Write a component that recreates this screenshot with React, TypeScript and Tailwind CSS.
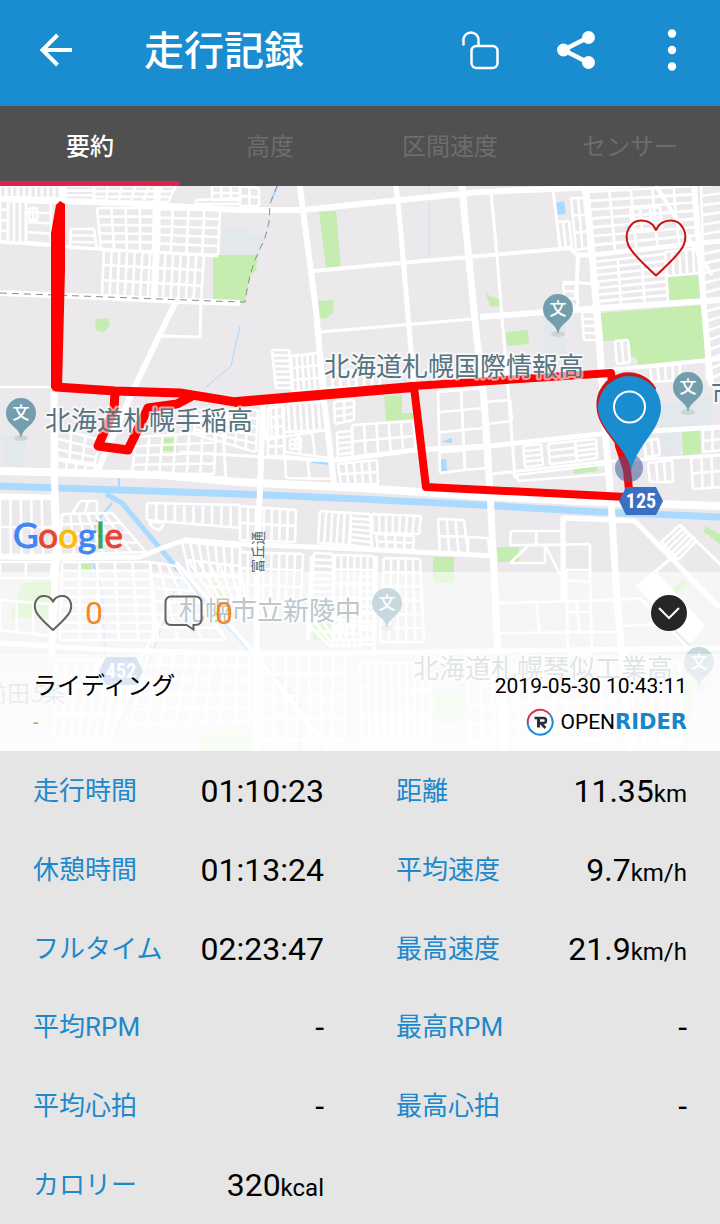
import React from "react";

type Quad = [number, number, number, number, number, number, number, number];
/** corners clockwise from top left, cells across, cells down, stroke width */
type StreetBlock = [Quad, number, number, number?];

const streetBlocks: StreetBlock[] = [
  [[0, 186, 60, 186, 60, 198, 0, 197], 10, 1],
  [[0, 199, 8, 199, 8, 242, 0, 241], 1, 4],
  [[8, 199, 26, 200, 26, 243, 8, 242], 3, 1],
  [[26, 202, 51, 203, 51, 244, 26, 242], 1, 4],
  [[29, 208, 37, 208, 37, 220, 29, 220], 2, 1],
  [[65, 186, 94, 186, 94, 200, 66, 200], 1, 3],
  [[94, 186, 176, 186, 168, 202, 94, 202], 6, 3],
  [[212, 186, 240, 186, 240, 200, 212, 200], 3, 2],
  [[196, 200, 240, 198, 240, 204, 195, 204], 1, 1],
  [[71, 229, 94, 229, 97, 249, 70, 248], 1, 3],
  [[97, 208, 154, 208, 153, 251, 101, 250], 4, 5],
  [[157, 209, 220, 210, 218, 255, 155, 252], 4, 5],
  [[104, 250, 204, 255, 201, 301, 102, 295], 13, 3],
  [[240, 186, 259, 188, 259, 206, 240, 206], 2, 2],
  [[272, 350, 289, 350, 292, 388, 276, 388], 1, 7],
  [[291, 356, 318, 353, 321, 390, 293, 392], 5, 3],
  [[324, 372, 380, 370, 380, 386, 325, 388], 7, 1],
  [[557, 222, 569, 221, 572, 249, 560, 248], 2, 1],
  [[571, 198, 585, 198, 589, 248, 576, 250], 2, 3],
  [[563, 284, 577, 284, 578, 306, 565, 306], 1, 3],
  [[582, 312, 599, 312, 602, 340, 584, 340], 1, 4],
  [[588, 192, 695, 186, 700, 243, 594, 254], 5, 7],
  [[630, 209, 660, 207, 662, 228, 632, 230], 3, 2],
  [[594, 262, 665, 254, 668, 302, 598, 308], 3, 7],
  [[665, 252, 700, 248, 701, 273, 667, 276], 5, 1],
  [[701, 186, 721, 184, 725, 372, 707, 380], 1, 20],
  [[615, 341, 628, 340, 630, 362, 617, 364], 2, 1],
  [[650, 367, 680, 364, 680, 380, 652, 382], 4, 1],
  [[57, 428, 100, 440, 94, 466, 57, 460], 3, 3],
  [[57, 458, 96, 464, 94, 472, 57, 470], 4, 1],
  [[136, 437, 216, 432, 214, 474, 132, 474], 6, 4],
  [[196, 410, 258, 410, 256, 452, 194, 434], 6, 5],
  [[264, 404, 324, 402, 326, 430, 266, 440], 10, 1],
  [[268, 408, 284, 406, 284, 456, 268, 456], 2, 5],
  [[290, 440, 301, 438, 301, 449, 290, 449], 2, 2],
  [[284, 432, 326, 430, 330, 458, 285, 452], 3, 1],
  [[285, 456, 330, 461, 333, 479, 286, 478], 2, 1],
  [[334, 402, 354, 400, 354, 420, 335, 424], 2, 3],
  [[337, 432, 352, 431, 353, 458, 338, 460], 1, 5],
  [[352, 425, 413, 421, 416, 451, 353, 458], 5, 2],
  [[338, 464, 377, 460, 378, 484, 341, 484], 5, 2],
  [[438, 392, 461, 390, 465, 470, 440, 473], 1, 4],
  [[461, 390, 482, 388, 486, 468, 465, 470], 1, 4],
  [[240, 506, 296, 510, 295, 542, 240, 540], 7, 2],
  [[320, 511, 351, 513, 349, 545, 318, 543], 5, 1],
  [[351, 513, 370, 514, 372, 548, 350, 545], 1, 6],
  [[372, 514, 421, 516, 419, 534, 373, 533], 7, 1],
  [[376, 534, 414, 536, 413, 550, 378, 549], 4, 2],
  [[438, 519, 464, 520, 468, 553, 440, 553], 3, 2],
  [[468, 537, 488, 538, 490, 556, 468, 554], 1, 1],
  [[240, 552, 303, 554, 300, 620, 240, 616], 8, 4],
  [[314, 553, 333, 554, 333, 604, 311, 604], 1, 8],
  [[335, 555, 374, 556, 374, 640, 333, 640], 6, 6],
  [[384, 558, 420, 559, 424, 642, 380, 642], 5, 6],
  [[147, 503, 240, 505, 240, 528, 147, 520], 10, 1],
  [[149, 522, 164, 523, 160, 530, 153, 528], 1, 1],
  [[182, 542, 240, 547, 240, 576, 190, 576], 7, 1],
  [[0, 499, 52, 499, 54, 555, 0, 555], 5, 2],
  [[80, 501, 97, 501, 97, 513, 72, 514], 2, 1],
  [[62, 514, 112, 513, 146, 552, 60, 555], 6, 4],
  [[0, 562, 52, 562, 51, 578, 0, 578], 2, 1],
  [[62, 562, 150, 562, 158, 640, 60, 640], 5, 9],
  [[188, 560, 240, 566, 248, 612, 222, 612], 5, 4],
  [[150, 562, 176, 566, 226, 640, 154, 640], 3, 6],
  [[0, 600, 50, 604, 50, 636, 0, 630], 3, 1],
  [[150, 650, 250, 652, 250, 722, 130, 724], 8, 5],
  [[56, 660, 128, 660, 112, 740, 54, 740], 7, 3],
  [[262, 652, 345, 652, 345, 740, 262, 740], 7, 4],
  [[300, 616, 360, 622, 360, 646, 330, 646], 6, 2],
  [[360, 576, 374, 576, 374, 652, 360, 652], 1, 10],
  [[360, 662, 430, 664, 430, 740, 362, 738], 9, 3],
  [[468, 668, 612, 664, 616, 740, 470, 742], 12, 4],
  [[632, 664, 680, 662, 682, 742, 634, 744], 5, 3],
  [[485, 402, 510, 400, 512, 421, 486, 424], 1, 1],
  [[523, 446, 541, 444, 543, 465, 525, 467], 1, 4],
  [[548, 444, 575, 441, 577, 461, 550, 464], 1, 3],
  [[575, 441, 596, 439, 597, 458, 577, 461], 1, 4],
  [[517, 475, 607, 464, 608, 474, 518, 481], 1, 1],
  [[644, 441, 658, 439, 660, 455, 646, 457], 2, 1],
  [[648, 463, 672, 460, 673, 482, 650, 482], 3, 1],
  [[691, 458, 722, 455, 722, 487, 693, 489], 3, 2],
  [[703, 430, 722, 428, 722, 450, 703, 452], 2, 2],
  [[511, 531, 562, 531, 562, 545, 510, 545], 2, 1],
  [[529, 545, 545, 545, 545, 563, 510, 563], 1, 1],
  [[545, 545, 590, 544, 590, 582, 563, 580], 1, 1],
  [[661, 542, 680, 525, 696, 541, 678, 560], 1, 5],
  [[640, 588, 656, 574, 704, 626, 690, 642], 8, 1],
  [[497, 603, 616, 600, 620, 632, 499, 633], 3, 1],
  [[566, 570, 590, 570, 592, 654, 568, 654], 1, 2],
  [[620, 600, 640, 598, 690, 650, 622, 652], 1, 2],
];

function lattice([[ax, ay, bx, by, cx, cy, dx, dy], cols, rows]: StreetBlock): string {
  const mix = (p: number, q: number, t: number) => Math.round((p + (q - p) * t) * 10) / 10;
  const parts: string[] = [];
  for (let i = 0; i <= cols; i++) {
    const t = i / cols;
    parts.push(`M${mix(ax, bx, t)} ${mix(ay, by, t)}L${mix(dx, cx, t)} ${mix(dy, cy, t)}`);
  }
  for (let j = 0; j <= rows; j++) {
    const t = j / rows;
    parts.push(`M${mix(ax, dx, t)} ${mix(ay, dy, t)}L${mix(bx, cx, t)} ${mix(by, cy, t)}`);
  }
  return parts.join("");
}

const roads: [string, number][] = [
  ["M0 199L120 203L240 210L303 210L360 204L480 192L600 187L640 184", 6],
  ["M63 186V204", 5],
  ["M157 186L157 240L154 298", 7],
  ["M0 242L100 249L218 256", 3],
  ["M0 293L100 297L180 301L240 303", 6],
  ["M176 301L135 386L97 472", 6],
  ["M201 301L200 337L162 336", 3],
  ["M300 186L303 210L316 310L324 400L334 484", 6],
  ["M396 186L400 222L414 386", 5],
  ["M462 186L465 220L477 340L484 400L490 490L498 655L504 751", 7],
  ["M585 186L590 230L600 350L606 440L611 500L617 600L622 655L630 751", 7],
  ["M694 186L700 260L706 330L711 385", 6],
  ["M313 271L400 263L480 256L570 248L578 256L576 300", 4],
  ["M320 332L473 319", 3],
  ["M480 317L600 308L720 300", 6],
  ["M491 192L497 256L503 330L508 388L515 478", 3],
  ["M553 190L560 247", 3],
  ["M563 282L600 284", 3],
  ["M577 255L592 255L700 243L720 241", 5],
  ["M655 184L676 218L700 256L712 275", 4],
  ["M600 371L720 359", 4],
  ["M0 387H55", 2],
  ["M330 461L414 450L490 446L600 434L720 427", 5],
  ["M492 474L600 462L720 455", 3],
  ["M0 471L160 475L240 482L360 488L480 496L600 502L720 506", 8],
  ["M54 392L54 470L57 540L54 600L52 655", 7],
  ["M0 496L55 497", 5],
  ["M0 557L60 558L140 557L162 548L185 540L240 544L360 549L494 556", 5],
  ["M263 400L260 490L257 560L256 751", 6],
  ["M222 410L224 450L226 480L288 482", 3],
  ["M180 452L330 461", 3],
  ["M563 600L563 518L635 521L720 608", 5],
  ["M680 525L722 566", 3],
  ["M636 588L690 542", 3],
  ["M0 643L110 650L250 654L420 652L720 648", 5],
  ["M176 562L256 655L330 751", 4],
  ["M172 600L140 660L110 740", 3],
  ["M312 556L308 640", 4],
  ["M376 556L374 655", 4],
];

const parks = [
  "M213 255H258L256 270L250 276L245 302H213Z",
  "M319 212L336 211L341 267L326 268Z",
  "M317 301L334 300L333 313L325 319L319 318Z",
  "M96 319L108 318L110 325L104 332L97 331L95 326Z",
  "M668 277L700 274L702 299L669 302Z",
  "M600 313L703 305L707 358L638 365L637 358L631 357L629 340L602 341Z",
  "M485 291L491 297L500 299V307L490 306Z",
  "M506 332L528 330L529 344L507 346Z",
  "M161 438H177V451H161Z",
  "M384 396L402 395V413H413V419L386 421Z",
  "M573 466L597 463V471L574 474Z",
  "M682 432L700 429L701 453L683 456Z",
  "M497 547H519V562H498Z",
  "M433 557H454V583H433Z",
  "M79 561H92V573H79Z",
  "M705 526L722 536V546L704 532Z",
  "M22 582L52 581L50 619L11 618Z",
  "M213 581L224 586L225 595L214 596Z",
  "M313 623H331V640H313Z",
  "M672 590L684 579L688 583L676 595Z",
  "M198 731L252 729V751H200Z",
  "M434 694H463V723H434Z",
  "M684 680H691V751H684Z",
  "M308 718L322 729L312 730Z",
];

function SchoolPin({ x, y }: { x: number; y: number }) {
  return (
    <g transform={`translate(${x} ${y})`}>
      <ellipse cx="0" cy="25" rx="7" ry="3" fill="#b9bec2" opacity=".5" />
      <path
        d="M0 25C-1.500 18-5 16-10.500 10.700A15 15 0 1 1 10.500 10.700C5 16 1.500 18 0 25Z"
        fill="#739eae"
      />
      <text y="6" textAnchor="middle" fontSize="17" fontWeight="500" fill="#fff">
        文
      </text>
    </g>
  );
}

function MapLabel({ x, y, children }: { x: number; y: number; children: string }) {
  return (
    <text
      x={x}
      y={y}
      fontSize="26"
      fill="#567380"
      stroke="#fff"
      strokeOpacity=".6"
      strokeWidth="4"
      strokeLinejoin="round"
      paintOrder="stroke"
    >
      {children}
    </text>
  );
}

function RouteShield({ x, y, label }: { x: number; y: number; label: string }) {
  return (
    <g transform={`translate(${x} ${y})`}>
      <path d="M-22 0L-15-14H15L22 0L15 14H-15Z" fill="#3a6fc3" />
      <text
        y="7"
        textAnchor="middle"
        fontSize="20"
        fontWeight="700"
        fill="#fff"
        fontFamily="'Liberation Sans Narrow', 'Roboto Condensed', sans-serif"
      >
        {label}
      </text>
    </g>
  );
}

function RideMap() {
  return (
    <svg
      viewBox="0 186 720 565"
      preserveAspectRatio="xMidYMid slice"
      className="absolute inset-0 size-full font-['Noto_Sans_CJK_JP',sans-serif]"
      role="img"
      aria-label="走行ルートの地図"
    >
      <rect y="186" width="720" height="565" fill="#ebe9ec" />
      <g fill="#e2e8eb">
        <path d="M222 229H251V236H266L258 256H221Z" />
        <path d="M543 316H566V354H543Z" />
        <path d="M0 436H25V468H6Z" />
        <path d="M660 406L710 394L712 424L660 432Z" />
        <path d="M660 434L680 431L681 455L661 457Z" />
        <path d="M376 646H392V670H376Z" />
      </g>
      <g fill="#c5edb0">
        {parks.map((d) => (
          <path key={d} d={d} />
        ))}
      </g>
      <g fill="#aadaff">
        <path d="M556 203L564 201L566 214L557 215Z" />
        <path d="M312 462L318 460L329 461V465L312 463Z" />
        <path d="M440 460L446 459L447 471L440 472Z" />
        <path d="M440 442L452 438V443Z" />
      </g>
      <g fill="none" stroke="#aadaff">
        <path d="M0 486L60 488L180 492L240 494L360 499L480 505L600 512L720 517" strokeWidth="7" />
        <path d="M106 494L122 503L186 579L250 650L298 700L301 751" strokeWidth="5" />
        <path d="M112 503L95 524L92 560L102 590L105 655" strokeWidth="2" />
        <path d="M119 472V492" strokeWidth="2" />
        <path d="M180 575L150 660L112 740" strokeWidth="2" />
        <path d="M240 326L231 366L205 388" strokeWidth="1" />
        <path d="M278 186L271 200" strokeWidth="2" />
        <path d="M429 186V260" strokeWidth="1" strokeOpacity=".4" />
        <path d="M672 628L692 648" strokeWidth="2" />
      </g>
      <g fill="none" stroke="#fff">
        {streetBlocks.map((block, i) => (
          <path key={i} d={lattice(block)} strokeWidth={block[3] ?? 2.6} />
        ))}
        {roads.map(([d, width]) => (
          <path key={d} d={d} strokeWidth={width} strokeLinejoin="round" />
        ))}
      </g>
      <path
        d="M0 293L240 302H245L248 284L254 262L265 238L269 222L270 204L277 186"
        fill="none"
        stroke="#8d8d8d"
        strokeWidth="1"
        strokeDasharray="7 5"
      />

      <g fill="none" stroke="#f00" strokeLinejoin="round" strokeLinecap="round">
        <path d="M56 205L60 201L65 204L65 270L62 388L51 388V233Z" fill="#f00" stroke="none" />
        <path d="M56 387L115 391L180 393L235 402" strokeWidth="9" />
        <path d="M237 402L413 387" strokeWidth="10" />
        <path d="M413 386L611 373" strokeWidth="8" />
        <path d="M115 392L114 410L98 446L128 450L148 408L177 404L192 396" strokeWidth="9" />
        <path d="M414 387L426 487L626 497" strokeWidth="8" />
        <path d="M611 373L614 400L619 446L627 470L630 500" strokeWidth="8" strokeLinecap="butt" />
      </g>

      <MapLabel x={324} y={376}>北海道札幌国際情報高</MapLabel>
      <MapLabel x={45} y={430}>北海道札幌手稲高</MapLabel>
      <MapLabel x={179} y={620}>札幌市立新陵中</MapLabel>
      <MapLabel x={413} y={678}>北海道札幌琴似工業高</MapLabel>
      <MapLabel x={711} y={403}>市</MapLabel>
      <text x="-16" y="702" fontSize="23" fill="#7b8a92">
        前田<tspan fontStyle="italic">5</tspan>条
      </text>
      <text transform="translate(263 573) rotate(-90)" fontSize="14" fill="#5d666b">
        富丘通
      </text>
      <SchoolPin x={558} y={309} />
      <SchoolPin x={21} y={413} />
      <SchoolPin x={688} y={387} />
      <SchoolPin x={387} y={603} />
      <SchoolPin x={699} y={662} />
      <RouteShield x={121} y={671} label="452" />

      <circle cx="629" cy="468" r="14" fill="#3f5a96" fillOpacity=".55" />
      <path d="M626 480L616 448L600 425A32 32 0 1 1 658 392L640 440Z" fill="#c81414" fillOpacity="0" />
      <path d="M630 470C624 446 596.500 430 596.500 406A32 32 0 0 1 656 388Z" fill="#d01414" />
      <path d="M631 471C627 446 598 430 598 407.500A31.500 31.500 0 0 1 661 407.500C661 430 636 446 631 471Z" fill="#1a8cd0" />
      <circle cx="629.500" cy="407" r="15.500" fill="none" stroke="#fff" strokeWidth="2" />
      <RouteShield x={641} y={501} label="125" />
      <text x="13" y="548" fontFamily="Lato, sans-serif" fontSize="35" strokeWidth="1">
        <tspan fill="#4285f4" stroke="#4285f4">G</tspan>
        <tspan fill="#ea4335" stroke="#ea4335">o</tspan>
        <tspan fill="#fbbc05" stroke="#fbbc05">o</tspan>
        <tspan fill="#4285f4" stroke="#4285f4">g</tspan>
        <tspan fill="#34a853" stroke="#34a853">l</tspan>
        <tspan fill="#ea4335" stroke="#ea4335">e</tspan>
      </text>
    </svg>
  );
}

function HeartIcon({ className }: { className: string }) {
  return (
    <svg viewBox="0 0 62 58" className={className} fill="none" stroke="currentColor" aria-hidden="true">
      <path
        d="M31 56.500C23 49 8 36 3.500 26.500C-2 13 6 1.500 16 1.500C23 1.500 28.500 5 31 11C33.500 5 39 1.500 46 1.500C56 1.500 64 13 58.500 26.500C54 36 39 49 31 56.500Z"
        vectorEffect="non-scaling-stroke"
        strokeWidth="2"
        strokeLinejoin="round"
      />
    </svg>
  );
}

function Header() {
  return (
    <header className="flex h-[106px] items-center bg-[#1a8cd0] pb-1.5 pl-9 text-white">
      <button type="button" aria-label="戻る" className="flex size-10 items-center justify-center">
        <svg viewBox="0 0 40 40" className="size-10" fill="none" stroke="currentColor" strokeWidth="4">
          <path d="M36 20H7M21.500 5L6.500 20L21.500 35" />
        </svg>
      </button>
      <h1 className="ml-17 flex-1 pt-1 text-[40px] leading-12 font-medium">走行記録</h1>
      <button type="button" aria-label="公開設定" className="flex w-24 justify-center">
        <svg viewBox="0 0 40 40" className="size-10" fill="none" stroke="currentColor" strokeWidth="2.500">
          <path d="M3.500 14.500V10A7.500 7.500 0 0 1 18.500 10V15.500" strokeLinecap="round" />
          <rect x="11.500" y="16" width="26" height="22" rx="5" />
        </svg>
      </button>
      <button type="button" aria-label="共有" className="flex w-24 justify-center">
        <svg viewBox="0 0 40 40" className="size-10" fill="currentColor">
          <path d="M32 7.500L7.500 20L32 32.500" fill="none" stroke="currentColor" strokeWidth="4.500" />
          <circle cx="7.500" cy="20" r="6.500" />
          <circle cx="32.500" cy="7.500" r="6.500" />
          <circle cx="32.500" cy="32.500" r="6.500" />
        </svg>
      </button>
      <button type="button" aria-label="メニュー" className="flex w-24 justify-center">
        <svg viewBox="0 0 44 44" className="size-11" fill="currentColor">
          <circle cx="22" cy="5.500" r="4.200" />
          <circle cx="22" cy="22" r="4.200" />
          <circle cx="22" cy="38.500" r="4.200" />
        </svg>
      </button>
    </header>
  );
}

function Tabs() {
  return (
    <nav role="tablist" className="grid h-20 grid-cols-4 bg-[#505050] text-2xl">
      {["要約", "高度", "区間速度", "センサー"].map((name, i) => (
        <button
          key={name}
          type="button"
          role="tab"
          aria-selected={i === 0}
          className="border-y-[5px] border-transparent pt-0.5 text-[#6d6d6d] aria-selected:border-b-[#e12349] aria-selected:font-medium aria-selected:text-white"
        >
          {name}
        </button>
      ))}
    </nav>
  );
}

function RideSummary() {
  return (
    <section className="relative flex aspect-[720/565] flex-col justify-end">
      <RideMap />
      <button type="button" aria-label="お気に入り" className="absolute top-[33px] right-[33px] text-[#cc1111]">
        <HeartIcon className="h-[58px] w-[62px]" />
      </button>
      <div className="relative flex h-[82px] items-center bg-white/60 px-[33px]">
        <button type="button" aria-label="いいね" className="flex w-[130px] items-center gap-3 text-[32px] text-[#f5871f]">
          <HeartIcon className="h-9 w-10 text-[#636363]" />
          <span>0</span>
        </button>
        <button type="button" aria-label="コメント" className="flex items-center gap-3 text-[32px] text-[#f5871f]">
          <svg viewBox="0 0 40 36" className="h-9 w-10 text-[#636363]" fill="none" stroke="currentColor" strokeWidth="2">
            <path d="M8 1.500H32Q38.500 1.500 38.500 8V24Q38.500 30 32 30H30.500V34.500L23.500 30H8Q2.500 30 2.500 24V8Q2.500 1.500 8 1.500Z" />
          </svg>
          <span>0</span>
        </button>
        <button
          type="button"
          aria-label="閉じる"
          className="ml-auto flex size-9 items-center justify-center rounded-full bg-[#262626] text-white"
        >
          <svg viewBox="0 0 24 16" className="h-4 w-6" fill="none" stroke="currentColor" strokeWidth="2">
            <path d="M2 3L12 13L22 3" />
          </svg>
        </button>
      </div>
      <div className="relative flex h-[97px] justify-between bg-linear-to-b from-white/80 to-white/90 px-[33px] pt-3.5 text-black">
        <div>
          <h2 className="text-2xl leading-9">ライディング</h2>
          <p className="text-xl leading-9 text-[#e59433]">-</p>
        </div>
        <div className="text-right text-[21px]">
          <time dateTime="2019-05-30T10:43:11" className="block leading-9">
            2019-05-30 10:43:11
          </time>
          <p className="flex items-center justify-end leading-9">
            <svg viewBox="0 0 28 28" className="mr-1.5 size-7" fill="none" strokeWidth="2" aria-hidden="true">
              <path d="M1.800 16A12.500 12.500 0 0 1 24 6.500" stroke="#d92f52" />
              <path d="M24 6.500A12.500 12.500 0 1 1 1.800 16" stroke="#1a8cd0" />
              <path d="M8.500 10H17.500Q20 10 20 12.500T17.500 15H14.500L19.500 20" stroke="#26303a" strokeWidth="2.500" />
              <path d="M12.500 10V19.500" stroke="#26303a" strokeWidth="3" />
            </svg>
            <span>OPEN</span>
            <span className="font-['DejaVu_Sans',sans-serif] font-bold text-[#1a84c6]">RIDER</span>
          </p>
        </div>
      </div>
    </section>
  );
}

const stats: { label: string; value: string; unit?: string }[] = [
  { label: "走行時間", value: "01:10:23" },
  { label: "距離", value: "11.35", unit: "km" },
  { label: "休憩時間", value: "01:13:24" },
  { label: "平均速度", value: "9.7", unit: "km/h" },
  { label: "フルタイム", value: "02:23:47" },
  { label: "最高速度", value: "21.9", unit: "km/h" },
  { label: "平均RPM", value: "-" },
  { label: "最高RPM", value: "-" },
  { label: "平均心拍", value: "-" },
  { label: "最高心拍", value: "-" },
  { label: "カロリー", value: "320", unit: "kcal" },
];

function Stats() {
  return (
    <dl className="grid flex-1 auto-rows-fr grid-cols-2 gap-x-[72px] bg-[#e5e5e5] px-[33px]">
      {stats.map(({ label, value, unit }) => (
        <div key={label} className="flex items-center justify-between pt-px">
          <dt className="text-[26px] leading-10 text-[#1e88cc]">{label}</dt>
          <dd className="text-[32px] leading-10 text-black">
            {value}
            {unit && <span className="text-2xl">{unit}</span>}
          </dd>
        </div>
      ))}
    </dl>
  );
}

export default function App() {
  return (
    <main className="flex min-h-screen flex-col font-[Roboto,'Noto_Sans_CJK_JP',sans-serif]">
      <Header />
      <Tabs />
      <RideSummary />
      <Stats />
    </main>
  );
}
